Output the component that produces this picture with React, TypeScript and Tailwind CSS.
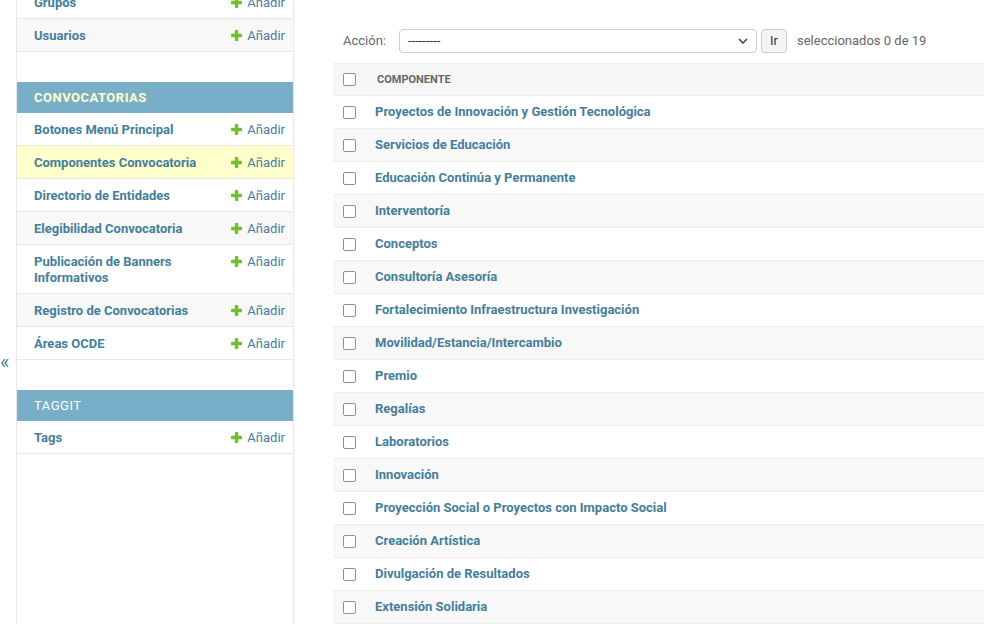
import React from "react";

interface ModelRow {
  name: string;
  current?: boolean;
}

interface AppModule {
  caption: string;
  current?: boolean;
  models: ModelRow[];
}

const modules: AppModule[] = [
  {
    caption: "",
    models: [{ name: "Grupos" }, { name: "Usuarios" }],
  },
  {
    caption: "Convocatorias",
    current: true,
    models: [
      { name: "Botones Menú Principal" },
      { name: "Componentes Convocatoria", current: true },
      { name: "Directorio de Entidades" },
      { name: "Elegibilidad Convocatoria" },
      { name: "Publicación de Banners Informativos" },
      { name: "Registro de Convocatorias" },
      { name: "Áreas OCDE" },
    ],
  },
  {
    caption: "Taggit",
    models: [{ name: "Tags" }],
  },
];

const componentes = [
  "Proyectos de Innovación y Gestión Tecnológica",
  "Servicios de Educación",
  "Educación Continúa y Permanente",
  "Interventoría",
  "Conceptos",
  "Consultoría Asesoría",
  "Fortalecimiento Infraestructura Investigación",
  "Movilidad/Estancia/Intercambio",
  "Premio",
  "Regalías",
  "Laboratorios",
  "Innovación",
  "Proyección Social o Proyectos con Impacto Social",
  "Creación Artística",
  "Divulgación de Resultados",
  "Extensión Solidaria",
];

function PlusIcon() {
  return (
    <svg width="11" height="11" viewBox="0 0 11 11" className="mt-[2px]">
      <rect x="3.8" y="0" width="3.4" height="11" rx="0.8" fill="#70bf2b" />
      <rect x="0" y="3.8" width="11" height="3.4" rx="0.8" fill="#70bf2b" />
    </svg>
  );
}

function Checkbox() {
  return (
    <span className="block w-[13px] h-[13px] rounded-[2px] border-[1.5px] border-[#8f8c9b] bg-white" />
  );
}

function Sidebar() {
  return (
    <nav className="w-[277px] shrink-0 border-r border-[#e8e8e8] h-full">
      <div className="-mt-[14px]">
        {modules.map((mod, mi) => (
          <div key={mi} className="mb-[30px]">
            {mod.caption && (
              <div
                className={
                  "h-[31px] bg-[#79aec8] pl-[17px] flex items-center uppercase tracking-[0.5px] text-[13px] " +
                  (mod.current ? "text-[#ffffcc] font-bold" : "text-white")
                }
              >
                {mod.caption}
              </div>
            )}
            {mod.models.map((m, i) => (
              <div
                key={m.name}
                className={
                  "flex border-b border-[#e8e8e8] pt-[9px] pb-[7px] leading-4 " +
                  (m.current
                    ? "bg-[#ffffcc]"
                    : i % 2 === 1
                    ? "bg-[#f8f8f8]"
                    : "bg-white")
                }
              >
                <div className="flex-1 min-w-0 pl-[17px] pr-2 font-bold text-[#447e9b]">
                  {m.name}
                </div>
                <div className="shrink-0 flex items-start gap-[5px] pl-[1px] pr-2 text-[#447e9b]">
                  <PlusIcon />
                  <span>Añadir</span>
                </div>
              </div>
            ))}
          </div>
        ))}
      </div>
    </nav>
  );
}

function ChangeList() {
  return (
    <main className="flex-1 min-w-0 pl-[39px] pt-[29px] overflow-hidden">
      <div className="flex items-center pl-[10px] h-[24px]">
        <span className="text-[#666]">Acción:</span>
        <div className="ml-[13px] w-[358px] h-[24px] border border-[#cccccc] rounded-[4px] bg-white flex items-center justify-between pl-[8px] pr-[8px]">
          <span className="text-[13px] text-[#333]">---------</span>
          <svg width="10" height="6" viewBox="0 0 10 6">
            <path d="M1 1l4 4 4-4" fill="none" stroke="#333" strokeWidth="1.4" />
          </svg>
        </div>
        <button className="ml-[4px] w-[26px] h-[24px] border border-[#cccccc] rounded-[4px] bg-[#f4f4f4] text-[#333] text-[13px] flex items-center justify-center">
          Ir
        </button>
        <span className="ml-[10px] text-[#666]">seleccionados 0 de 19</span>
      </div>

      <div className="mt-[10px] w-full">
        <div className="flex items-center h-[33px] border-y border-[#eeeeee] bg-[#f6f6f6]">
          <div className="w-[44px] pl-[10px]">
            <Checkbox />
          </div>
          <span className="text-[11px] font-bold text-[#666] uppercase">
            Componente
          </span>
        </div>
        {componentes.map((c, i) => (
          <div
            key={c}
            className={
              "flex items-center h-[33px] border-b border-[#eeeeee] " +
              (i % 2 === 1 ? "bg-[#f8f8f8]" : "bg-white")
            }
          >
            <div className="w-[42px] pl-[10px]">
              <Checkbox />
            </div>
            <span className="font-bold text-[#447e9b]">{c}</span>
          </div>
        ))}
      </div>
    </main>
  );
}

export default function App() {
  return (
    <div
      className="flex w-[984px] h-[624px] overflow-hidden bg-white text-[13px] leading-4 text-[#333]"
      style={{ fontFamily: "Roboto, 'Liberation Sans', sans-serif" }}
    >
      <div className="w-[17px] shrink-0 border-r border-[#e8e8e8] h-full">
        <div className="pt-[350px] text-[20px] leading-6 text-[#447e9b]">«</div>
      </div>
      <Sidebar />
      <ChangeList />
    </div>
  );
}
